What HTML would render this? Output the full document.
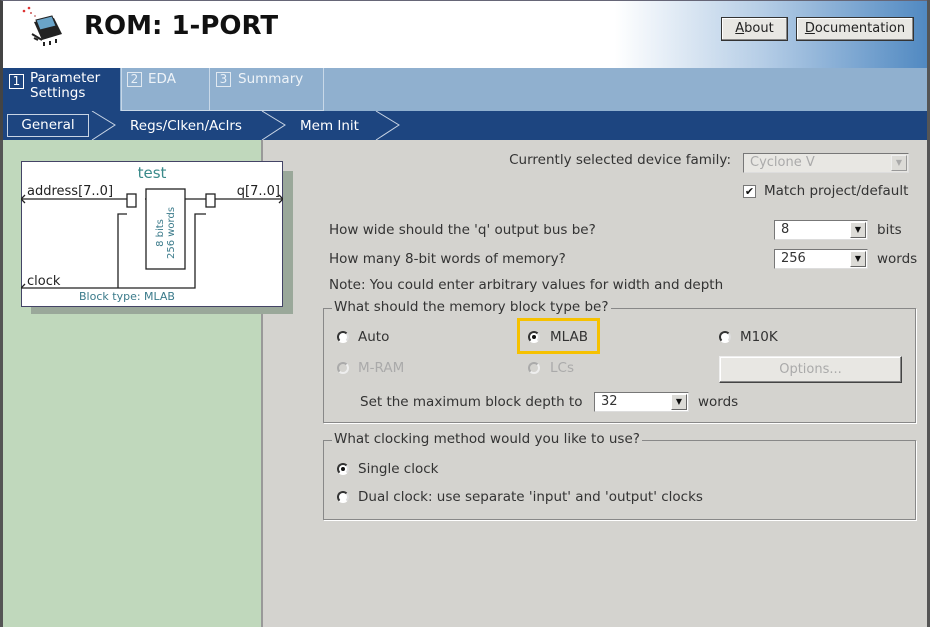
<!DOCTYPE html>
<html><head><meta charset="utf-8"><style>
*{margin:0;padding:0;box-sizing:border-box}
body{width:930px;height:627px;overflow:hidden;background:#d4d3cf;font-family:"DejaVu Sans","Liberation Sans",sans-serif;font-size:13.5px;color:#333;position:relative}
.a{position:absolute;white-space:nowrap}
.r{position:absolute;white-space:nowrap;text-align:right}
.btn{position:absolute;background:#e8e7e3;border:1px solid #333;box-shadow:inset -1px -1px #888,inset 1px 1px #fff;font-size:13px;text-align:center;line-height:22px;color:#222}
.cb{position:absolute;background:#fff;border:1px solid #777;border-right-color:#ddd;border-bottom-color:#ddd;font-size:13px;padding-left:6px;line-height:18px}
.cb .ar{position:absolute;right:1px;top:1px;width:16px;height:16px;background:#dcdbd7;border:1px solid #666;border-left-color:#fff;border-top-color:#fff;font-size:8px;text-align:center;line-height:14px;color:#111}
.rd{position:absolute;width:12px;height:12px;border-radius:50%;background:#fff;border:2px solid #333;border-right-color:#ddd;border-bottom-color:#fff}
.rd.on::after{content:"";position:absolute;left:2px;top:2px;width:4px;height:4px;border-radius:50%;background:#111}
.rd.dis{border-color:#aaa #eee #eee #aaa;background:#d4d3cf}
.grp{position:absolute;border:1px solid #888;box-shadow:1px 1px #fff}
.lg{position:absolute;background:#d4d3cf;padding:0 2px;font-size:13.5px;top:-10px;left:8px;color:#333}
</style></head><body>
<div class="a" style="left:0;top:0;width:930px;height:68px;background:linear-gradient(90deg,#fff 0%,#fff 66%,#b5cde6 82%,#4f88c1 100%);border-left:3px solid #444;border-top:1px solid #667"></div>
<svg class="a" style="left:22px;top:4px" width="50" height="45" viewBox="0 0 50 45">
<circle cx="2" cy="7" r="1.3" fill="#d33"/><circle cx="7" cy="4" r="1.3" fill="#d33"/><circle cx="9" cy="9" r="1" fill="#c55"/><circle cx="13" cy="12" r="1" fill="#c88"/>
<polygon points="12,18 32,14 40,30 20,36" fill="#222"/><polygon points="14,16 30,12 34,22 18,26" fill="#6aa4c8" stroke="#222"/>
<path d="M10 30 L20 36 M12 34l4 2M22 38l0 4M28 37l0 4M34 35l0 4" stroke="#222" stroke-width="2"/></svg>
<div class="a" style="left:84px;top:11px;font-size:26px;font-weight:bold;color:#111">ROM: 1-PORT</div>
<div class="btn" style="left:721px;top:17px;width:67px;height:24px"><u>A</u>bout</div>
<div class="btn" style="left:796px;top:17px;width:118px;height:24px"><u>D</u>ocumentation</div>
<div class="a" style="left:0;top:68px;width:930px;height:43px;background:#90b0cf;border-left:3px solid #444"></div>
<div class="a" style="left:3px;top:68px;width:117px;height:43px;background:#1d4580"></div>
<div class="a" style="left:121px;top:68px;width:89px;height:43px;border:1px solid #c8d8e8;border-top:none"></div>
<div class="a" style="left:210px;top:68px;width:114px;height:43px;border:1px solid #c8d8e8;border-top:none;border-left:none"></div>
<div class="a" style="left:9px;top:74px;width:15px;height:15px;border:1px solid #fff;color:#fff;font-size:12px;line-height:13px;text-align:center">1</div>
<div class="a" style="left:30px;top:71px;color:#fff;font-size:13.5px;line-height:15px">Parameter<br>Settings</div>
<div class="a" style="left:127px;top:72px;width:15px;height:15px;border:1px solid #e0e8f0;color:#e8f0f8;font-size:12px;line-height:13px;text-align:center">2</div>
<div class="a" style="left:148px;top:71px;color:#eef3f8;font-size:13.5px">EDA</div>
<div class="a" style="left:216px;top:72px;width:15px;height:15px;border:1px solid #e0e8f0;color:#e8f0f8;font-size:12px;line-height:13px;text-align:center">3</div>
<div class="a" style="left:238px;top:71px;color:#eef3f8;font-size:13.5px">Summary</div>
<div class="a" style="left:0;top:111px;width:930px;height:29px;background:#1d4580;border-left:3px solid #444"></div>
<div class="a" style="left:7px;top:114px;width:82px;height:23px;border:1px solid #c8d4e4;color:#fff;font-size:13.5px;text-align:center;line-height:21px">General</div>
<svg class="a" style="left:0;top:111px" width="420" height="29"><g fill="none" stroke="#c8d4e4" stroke-width="1"><path d="M92 0 L115 14 L92 29"/><path d="M262 0 L285 14 L262 29"/><path d="M376 0 L399 14 L376 29"/></g></svg>
<div class="a" style="left:130px;top:118px;color:#fff;font-size:13.5px">Regs/Clken/Aclrs</div>
<div class="a" style="left:300px;top:118px;color:#fff;font-size:13.5px">Mem Init</div>
<div class="a" style="left:0;top:140px;width:263px;height:487px;background:#c0d8bc;border-left:3px solid #555;border-right:2px solid #999"></div>
<div class="a" style="left:31px;top:171px;width:262px;height:143px;background:#9aa89a"></div>
<div class="a" style="left:21px;top:161px;width:262px;height:146px;background:#fff;border:1px solid #446"></div>
<svg class="a" style="left:21px;top:161px" width="262" height="146" viewBox="0 0 262 146">
<text x="131" y="17" font-size="15" fill="#3a8a8a" text-anchor="middle" font-family="DejaVu Sans">test</text>
<text x="6" y="34" font-size="13" fill="#222" font-family="DejaVu Sans">address[7..0]</text>
<text x="259" y="34" font-size="13" fill="#222" text-anchor="end" font-family="DejaVu Sans">q[7..0]</text>
<text x="6" y="124" font-size="13" fill="#222" font-family="DejaVu Sans">clock</text>
<text x="106" y="139" font-size="11" fill="#3a7a8a" text-anchor="middle" font-family="DejaVu Sans">Block type: MLAB</text>
<g stroke="#222" fill="none" stroke-width="1.3">
<path d="M0 38 H106 M124 38 H135 M164 38 H185 M194 38 H262"/>
<path d="M0 127 H174 V53 H185 M97 127 V53 H106"/>
<rect x="106" y="33" width="9" height="13" fill="#fff"/><rect x="185" y="33" width="9" height="13" fill="#fff"/>
<rect x="125" y="28" width="39" height="80" fill="#fff"/>
<path d="M4 34 L0 38 L4 42 M258 34 L262 38 L258 42 M4 123 L0 127"/>
</g>
<text transform="translate(142,72) rotate(-90)" font-size="10" fill="#3a7a8a" text-anchor="middle" font-family="DejaVu Sans">8 bits</text>
<text transform="translate(153,72) rotate(-90)" font-size="10" fill="#3a7a8a" text-anchor="middle" font-family="DejaVu Sans">256 words</text>
</svg>
<div class="a" style="left:927px;top:0;width:3px;height:627px;background:#555"></div>
<div class="r" style="right:199px;top:152px">Currently selected device family:</div>
<div class="cb" style="left:743px;top:153px;width:166px;height:20px;background:#e8e7e3;color:#aaa">Cyclone V<span class="ar" style="color:#aaa;border-color:#eee #999 #999 #eee">▼</span></div>
<div class="a" style="left:743px;top:185px;width:13px;height:13px;background:#fff;border:1px solid #777;font-size:11px;line-height:11px;text-align:center;color:#111">✔</div>
<div class="a" style="left:764px;top:183px">Match project/default</div>
<div class="a" style="left:329px;top:222px">How wide should the 'q' output bus be?</div>
<div class="cb" style="left:774px;top:220px;width:94px;height:20px">8<span class="ar">▼</span></div>
<div class="a" style="left:877px;top:222px">bits</div>
<div class="a" style="left:329px;top:251px">How many 8-bit words of memory?</div>
<div class="cb" style="left:774px;top:249px;width:94px;height:20px">256<span class="ar">▼</span></div>
<div class="a" style="left:877px;top:251px">words</div>
<div class="a" style="left:329px;top:277px">Note: You could enter arbitrary values for width and depth</div>
<div class="grp" style="left:323px;top:308px;width:593px;height:115px"><span class="lg">What should the memory block type be?</span></div>
<div class="rd" style="left:337px;top:331px"></div><div class="a" style="left:358px;top:329px">Auto</div>
<div class="rd on" style="left:528px;top:331px"></div><div class="a" style="left:550px;top:329px">MLAB</div>
<div class="a" style="left:517px;top:318px;width:83px;height:36px;border:3px solid #f6c100"></div>
<div class="rd" style="left:719px;top:331px"></div><div class="a" style="left:740px;top:329px">M10K</div>
<div class="rd dis" style="left:337px;top:362px"></div><div class="a" style="left:358px;top:360px;color:#aaa">M-RAM</div>
<div class="rd dis" style="left:528px;top:362px"></div><div class="a" style="left:550px;top:360px;color:#aaa">LCs</div>
<div class="btn" style="left:719px;top:356px;width:183px;height:27px;line-height:25px;color:#aaa;border-color:#eee #444 #444 #eee">Options...</div>
<div class="a" style="left:360px;top:394px">Set the maximum block depth to</div>
<div class="cb" style="left:594px;top:392px;width:95px;height:20px">32<span class="ar">▼</span></div>
<div class="a" style="left:698px;top:394px">words</div>
<div class="grp" style="left:323px;top:440px;width:593px;height:80px"><span class="lg">What clocking method would you like to use?</span></div>
<div class="rd on" style="left:337px;top:463px"></div><div class="a" style="left:358px;top:461px">Single clock</div>
<div class="rd" style="left:337px;top:491px"></div><div class="a" style="left:358px;top:489px">Dual clock: use separate 'input' and 'output' clocks</div>
</body></html>
